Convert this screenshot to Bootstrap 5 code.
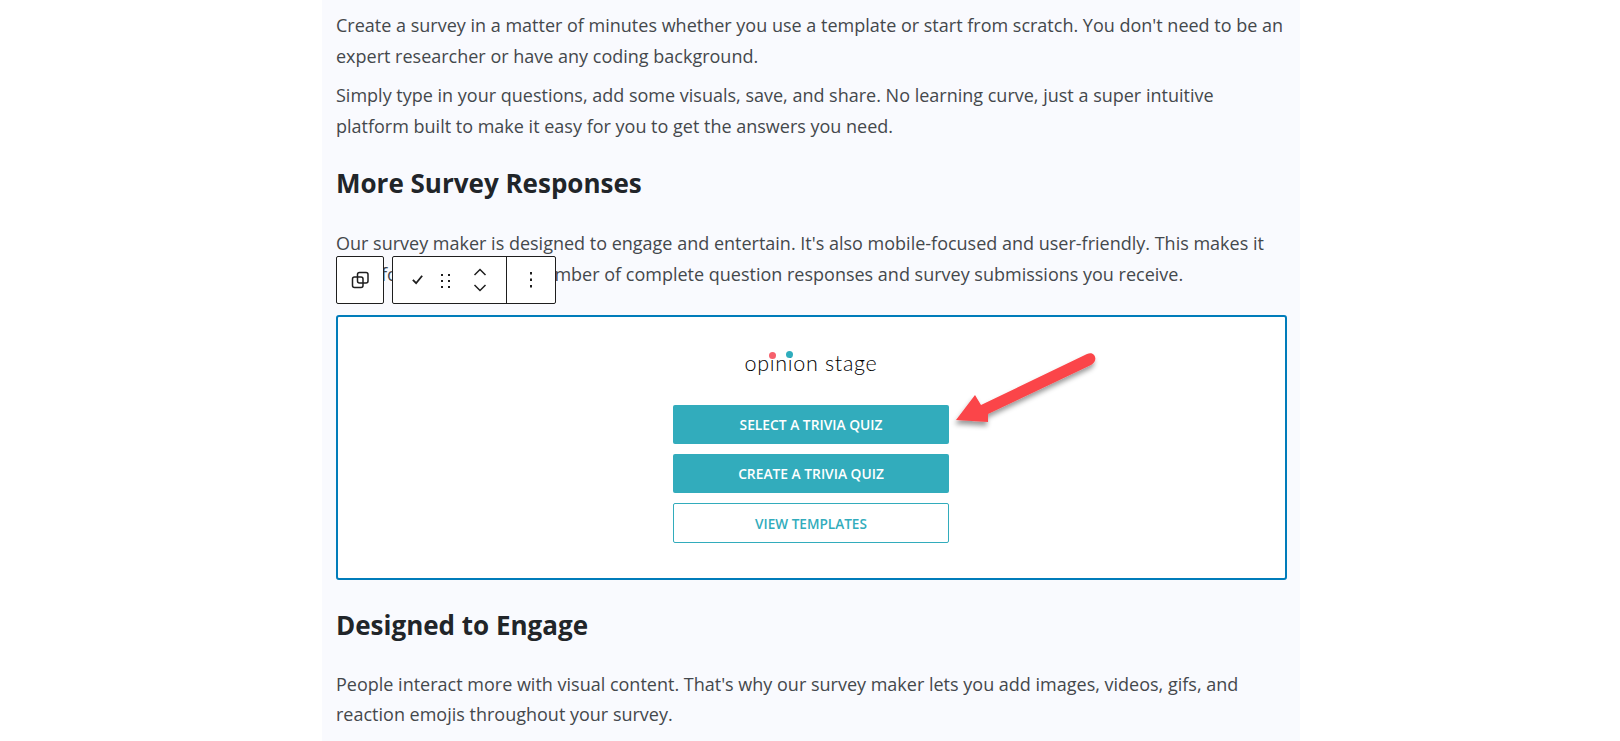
<!DOCTYPE html>
<html lang="en">
<head>
<meta charset="utf-8">
<title>Survey maker</title>
<link href="https://cdn.jsdelivr.net/npm/bootstrap@5.3.0/dist/css/bootstrap.min.css" rel="stylesheet">
<style>
html,body{height:741px;overflow:hidden;background:#fff}
body{font-family:"Open Sans","Noto Sans",sans-serif;color:#3c4043}
.sheet{width:978px;height:741px;margin-left:322px;background:#f9fafe;padding:10px 14px 0;position:relative}
.copy{font-size:18px;line-height:30.6px;margin:0 0 9px;color:#44484c}
.head2{font-size:26px;line-height:34px;font-weight:700;color:#212529;margin:0}
.h-one{margin-top:25px;margin-bottom:28px}
.h-two{margin-top:28px;margin-bottom:27px}
.picked{height:265px;width:951px;margin-top:25px;background:#fff;border:2px solid #007cba;border-radius:3px;position:relative}
.logo-wrap{position:relative;width:130px;height:26px;margin:28px auto 0;left:-2px}
.logo-txt{font-family:Lato,"Open Sans",sans-serif;font-weight:300;font-size:21.5px;line-height:26px;letter-spacing:.7px;color:#000;white-space:nowrap;display:block;text-align:center;padding-top:5px}
.dot{position:absolute;border-radius:50%}
.dot-a{width:7px;height:7px;background:#f6606c;left:24.5px;top:7px}
.dot-b{width:7px;height:7px;background:#2fadbd;left:41px;top:6px}
.stack{width:276px;margin:34px 0 0 335px}
.act{display:block;width:276px;height:39px;border-radius:2px;padding:0;font-size:13.8px;font-weight:600;line-height:39px;background:#32acbc;color:#fff;border:0;margin-bottom:10px;text-transform:uppercase}
.act:hover{background:#32acbc;color:#fff}
.act-line{height:40px;font-size:13.6px;line-height:40px;background:#fff;color:#32acbc;border:1px solid #32acbc}
.act-line:hover{background:#fff;color:#32acbc}
.tool{position:absolute;top:256px;height:48px;background:#fff;border:1px solid #1e1e1e;border-radius:2px;display:flex;align-items:stretch}
.tool-a{left:14px;width:48px;justify-content:center;align-items:center}
.tool-b{left:70px;width:164px}
.seg{display:flex;align-items:center;justify-content:center}
.seg-main{width:114px;border-right:1px solid #1e1e1e;position:relative}
.seg-more{flex:1}
.arrow{position:absolute;left:0;top:0;overflow:visible;pointer-events:none}
</style>
</head>
<body>
<main class="sheet">
  <p class="copy">Create a survey in a matter of minutes whether you use a template or start from scratch. You don't need to be an expert researcher or have any coding background.</p>
  <p class="copy">Simply type in your questions, add some visuals, save, and share. No learning curve, just a super intuitive platform built to make it easy for you to get the answers you need.</p>
  <h2 class="head2 h-one">More Survey Responses</h2>
  <p class="copy">Our survey maker is designed to engage and entertain. It's also mobile-focused and user-friendly. This makes it ideal for increasing the number of complete question responses and survey submissions you receive.</p>

  <section class="picked">
    <div class="logo-wrap">
      <span class="logo-txt">opinion stage</span>
      <span class="dot dot-a"></span><span class="dot dot-b"></span>
    </div>
    <div class="stack">
      <a class="btn act" href="#">Select a Trivia Quiz</a>
      <a class="btn act" href="#">Create a Trivia Quiz</a>
      <a class="btn act act-line" href="#">View Templates</a>
    </div>
    <svg class="arrow" width="947" height="261" viewBox="338 317 947 261" aria-hidden="true">
      <defs><filter id="shade" x="-20%" y="-20%" width="140%" height="150%"><feDropShadow dx="-1" dy="4" stdDeviation="2.5" flood-color="#000" flood-opacity=".4"/></filter></defs>
      <path filter="url(#shade)" fill="#fb4548" d="M956 420 L975 395 L981 405 L1087 354 C1095 350 1099 361 1091 365 L988 414 L988 422 Z"/>
    </svg>
  </section>

  <h2 class="head2 h-two">Designed to Engage</h2>
  <p class="copy">People interact more with visual content. That's why our survey maker lets you add images, videos, gifs, and reaction emojis throughout your survey.</p>

  <div class="tool tool-a">
    <svg width="18" height="18" viewBox="0 0 18 18" fill="none" stroke="#1e1e1e" stroke-width="1.5"><rect x="1.500" y="6" width="10.500" height="10.500" rx="2"/><rect x="6.500" y="1.500" width="10.500" height="10.500" rx="2"/></svg>
  </div>
  <div class="tool tool-b">
    <div class="seg seg-main flex-shrink-0">
      <svg class="position-absolute" style="left:18px;top:16px" width="13" height="13" viewBox="0 0 14 14" fill="none" stroke="#1e1e1e" stroke-width="2"><path d="M2 7.500 5.500 11 12 3"/></svg>
      <svg class="position-absolute" style="left:47px;top:16px" width="13" height="15" viewBox="0 0 13 15" fill="#1e1e1e"><rect x="1" y="1" width="2" height="2"/><rect x="8" y="1" width="2" height="2"/><rect x="1" y="7" width="2" height="2"/><rect x="8" y="7" width="2" height="2"/><rect x="1" y="13" width="2" height="2"/><rect x="8" y="13" width="2" height="2"/></svg>
      <svg class="position-absolute" style="left:80px;top:11px" width="14" height="26" viewBox="0 0 14 26" fill="none" stroke="#1e1e1e" stroke-width="1.500"><path d="M1.500 7 7 1.500 12.500 7"/><path d="M1.500 17 7 22.500 12.500 17"/></svg>
    </div>
    <div class="seg seg-more">
      <svg width="4" height="16" viewBox="0 0 4 16" fill="#1e1e1e"><rect x="1" y="0" width="2" height="2.500"/><rect x="1" y="6.500" width="2" height="2.500"/><rect x="1" y="13" width="2" height="2.500"/></svg>
    </div>
  </div>
</main>
<script src="https://cdn.jsdelivr.net/npm/bootstrap@5.3.0/dist/js/bootstrap.bundle.min.js"></script>
</body>
</html>
